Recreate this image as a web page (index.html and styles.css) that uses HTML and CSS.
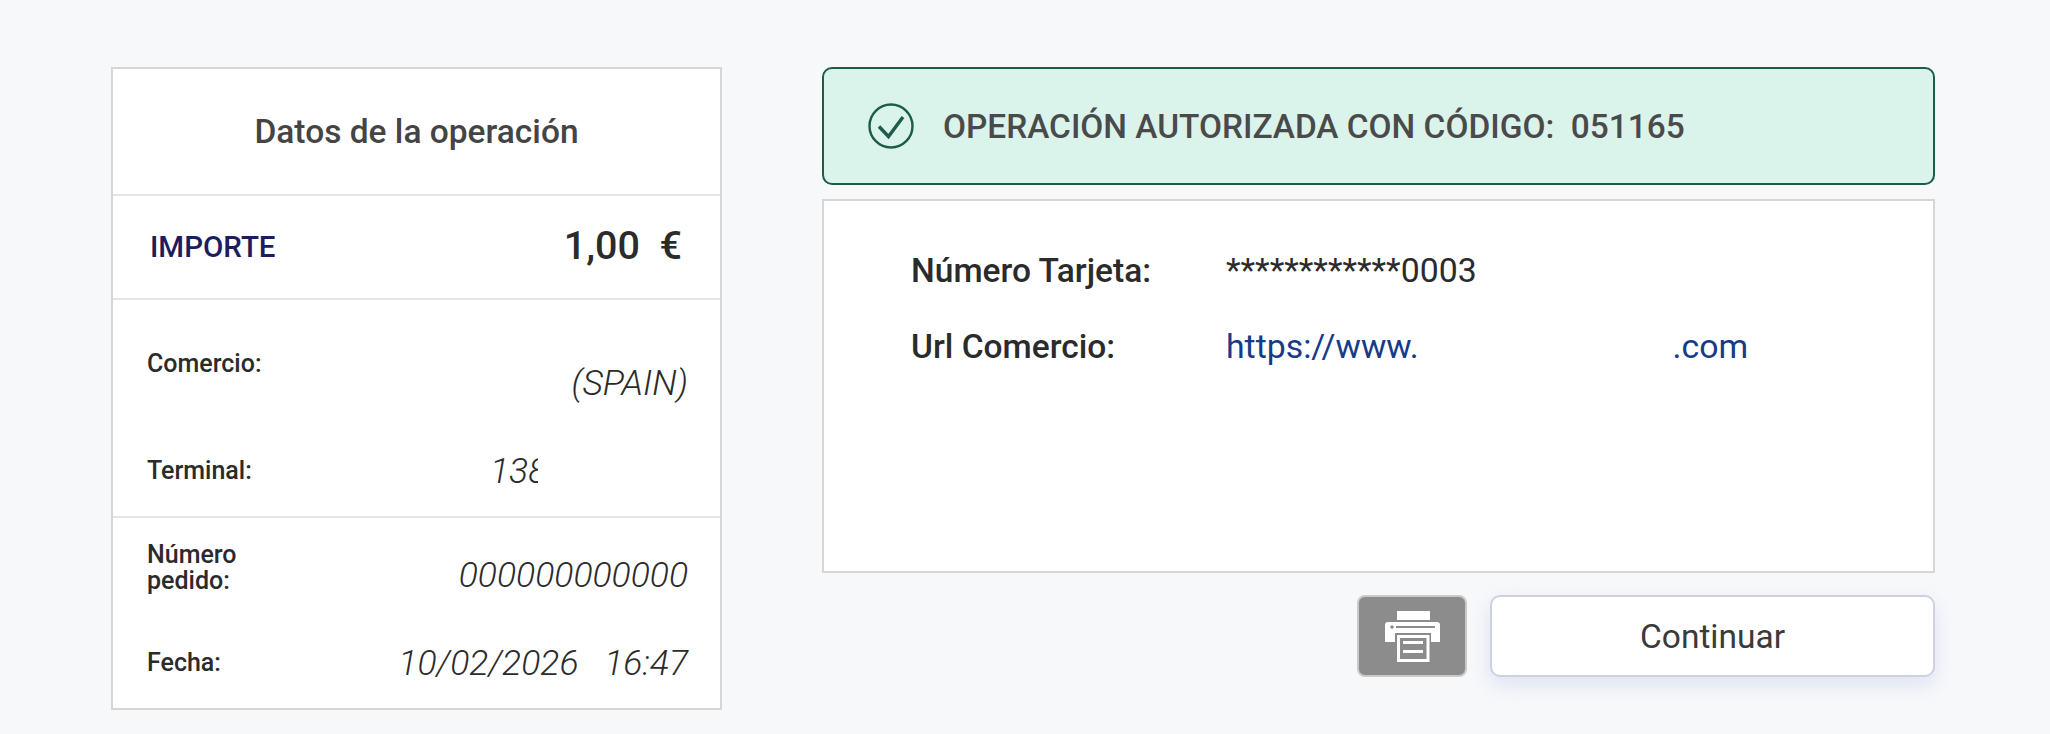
FILE: index.html
```html
<!DOCTYPE html>
<html lang="es">
<head>
    <meta charset="UTF-8">
    <title>Datos de la operación</title>
    <link rel="stylesheet" href="styles.css">
</head>
<body>
    <div class="page">
        <!-- Resumen de la operación -->
        <div class="summary">
            <h1 class="summary-title">Datos de la operación</h1>
            <div class="amount-row">
                <span class="amount-label">IMPORTE</span>
                <span class="amount-value">1,00&nbsp;&nbsp;€</span>
            </div>
            <div class="details details-shop">
                <div class="detail detail-shop">
                    <span class="detail-label">Comercio:</span>
                    <span class="detail-value">(SPAIN)</span>
                </div>
                <div class="detail detail-terminal">
                    <span class="detail-label">Terminal:</span>
                    <span class="detail-value terminal-value">138</span>
                </div>
            </div>
            <div class="details details-order">
                <div class="detail detail-order">
                    <span class="detail-label order-label">Número pedido:</span>
                    <span class="detail-value">000000000000</span>
                </div>
                <div class="detail detail-date">
                    <span class="detail-label">Fecha:</span>
                    <span class="detail-value">10/02/2026&nbsp;&nbsp;&nbsp;16:47</span>
                </div>
            </div>
        </div>

        <!-- Resultado -->
        <div class="result">
            <div class="alert">
                <svg class="alert-icon" viewBox="0 0 46 46" width="46" height="46" fill="none" stroke="#1c5c49">
                    <circle cx="23" cy="23" r="21.5" stroke-width="2.4"/>
                    <path d="M11 23.5l9.5 10L35 14" stroke-width="3.4"/>
                </svg>
                <span class="alert-text">OPERACIÓN AUTORIZADA CON CÓDIGO:&nbsp;&nbsp;051165</span>
            </div>
            <div class="card-info">
                <div class="info-row">
                    <span class="info-label">Número Tarjeta:</span>
                    <span class="info-value">************0003</span>
                </div>
                <div class="info-row">
                    <span class="info-label">Url Comercio:</span>
                    <span class="info-value info-link">https://www.<span class="link-gap"></span>.com</span>
                </div>
            </div>
            <div class="actions">
                <button class="btn-print" type="button" aria-label="Imprimir">
                    <svg viewBox="0 0 55 51" width="55" height="51">
                        <rect x="12" y="0" width="33" height="9" fill="#fff"/>
                        <path d="M3 11h49a3 3 0 0 1 3 3v17H0V14a3 3 0 0 1 3-3z" fill="#fff"/>
                        <rect x="11" y="15" width="39" height="2" fill="#8c8c8c"/>
                        <circle cx="7" cy="16" r="1.8" fill="#8c8c8c"/>
                        <rect x="10" y="22" width="36" height="29" fill="#8c8c8c"/>
                        <rect x="13.5" y="25.5" width="29.5" height="24" fill="#8c8c8c" stroke="#fff" stroke-width="3"/>
                        <rect x="18" y="30" width="20" height="3" fill="#fff"/>
                        <rect x="18" y="39" width="20" height="3" fill="#fff"/>
                    </svg>
                </button>
                <button class="btn-continue" type="button">Continuar</button>
            </div>
        </div>
    </div>
</body>
</html>
```

FILE: styles.css
```css
/* Página */
body {
    margin: 0;
    background-color: #f7f8fa;
    font-family: Roboto, "Liberation Sans", sans-serif;
    color: #2b2b2b;
}

.page {
    display: flex;
    align-items: flex-start;
    gap: 100px;
    padding: 67px 115px 0 111px;
}

/* Resumen */
.summary {
    width: 611px;
    height: 643px;
    box-sizing: border-box;
    flex: none;
    background-color: #fff;
    border: 2px solid #d6d6d6;
}

.summary-title {
    height: 125px;
    margin: 0;
    display: flex;
    align-items: center;
    justify-content: center;
    font-size: 33.5px;
    font-weight: 500;
    color: #444;
    border-bottom: 2px solid #e6e6e6;
}

.amount-row {
    height: 102px;
    display: flex;
    align-items: center;
    justify-content: space-between;
    padding: 0 38px 0 37px;
    border-bottom: 2px solid #e6e6e6;
}

.amount-label {
    font-size: 29.5px;
    font-weight: 500;
    color: #1d1d5e;
}

.amount-value {
    font-size: 39.5px;
    font-weight: 500;
    margin-bottom: 4px;
}

.details {
    box-sizing: border-box;
    padding: 0 32px 0 34px;
}

.details-shop {
    height: 218px;
    border-bottom: 2px solid #e6e6e6;
}

.detail {
    display: flex;
    justify-content: space-between;
    align-items: center;
}

.detail-label {
    font-size: 25px;
    font-weight: 500;
    line-height: 26px;
}

.detail-value {
    font-size: 35.5px;
    font-weight: 300;
    font-style: italic;
    color: #2b2b2b;
}

.detail-shop {
    height: 80px;
    padding-top: 51px;
    align-items: flex-start;
}

.detail-shop .detail-value {
    margin-top: 11px;
}

.detail-terminal {
    height: 60px;
    padding-top: 10px;
}

.terminal-value {
    width: 48px;
    height: 42px;
    line-height: 42px;
    overflow: hidden;
    margin-right: 150px;
}

.detail-order {
    height: 114px;
}

.order-label {
    width: 120px;
    margin-bottom: 15px;
}

.detail-date {
    height: 62px;
}

/* Resultado */
.result {
    flex: 1;
    min-width: 0;
}

.alert {
    height: 118px;
    box-sizing: border-box;
    display: flex;
    align-items: center;
    gap: 29px;
    padding-left: 44px;
    background-color: #daf3eb;
    border: 2px solid #1c5c49;
    border-radius: 10px;
}

.alert-icon {
    flex: none;
}

.alert-text {
    font-size: 33.4px;
    font-weight: 500;
    color: #4a4a4a;
}

.card-info {
    height: 374px;
    box-sizing: border-box;
    margin-top: 14px;
    padding: 32px 0 0 87px;
    background-color: #fff;
    border: 2px solid #d6d6d6;
}

.info-row {
    display: flex;
    align-items: center;
    height: 75.5px;
    font-size: 33.5px;
}

.info-label {
    width: 315px;
    flex: none;
    font-weight: 500;
}

.info-value {
    font-size: 33.8px;
}

.info-link {
    color: #173a8a;
}

.link-gap {
    display: inline-block;
    width: 254px;
}

/* Botones */
.actions {
    display: flex;
    justify-content: flex-end;
    gap: 23px;
    margin-top: 22px;
}

.btn-print {
    width: 110px;
    height: 82px;
    padding: 0;
    display: flex;
    align-items: center;
    justify-content: center;
    background-color: #8c8c8c;
    border: 2px solid #c9c9c9;
    border-radius: 8px;
}

.btn-continue {
    width: 445px;
    height: 82px;
    background-color: #fff;
    border: 2px solid #ccd2e0;
    border-radius: 10px;
    box-shadow: 0 8px 20px rgba(120, 145, 215, 0.2);
    font-family: inherit;
    font-size: 33.5px;
    color: #3a3a3a;
}
```
